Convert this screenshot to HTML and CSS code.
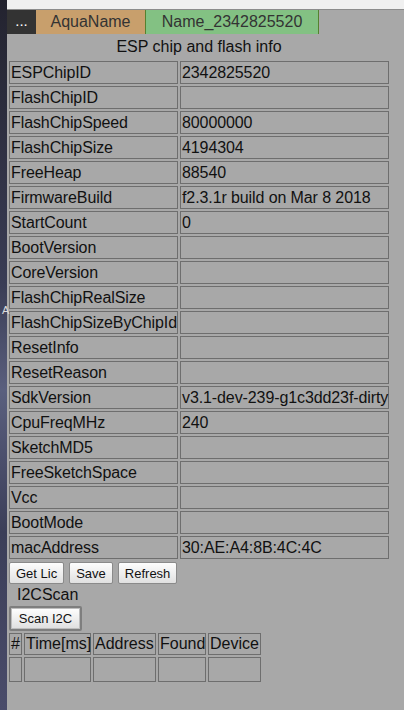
FILE: index.html
```html
<!DOCTYPE html>
<html lang="en">
<head>
    <meta charset="UTF-8">
    <meta name="viewport" content="width=device-width, initial-scale=1.0">
    <title>ESP Info</title>
    <link rel="stylesheet" href="styles.css">
</head>
<body>
    <div class="desk"><span class="desk-a">A</span></div>
    <div class="win">
        <div class="topbar"></div>
        <div class="page">
            <div class="tabs">
                <div class="tab tab-menu">...</div>
                <div class="tab tab-aqua">AquaName</div>
                <div class="tab tab-name">Name_2342825520</div>
            </div>

            <table class="info">
                <caption>ESP chip and flash info</caption>
                <tr><td class="key">ESPChipID</td><td class="val">2342825520</td></tr>
                <tr><td class="key">FlashChipID</td><td class="val"></td></tr>
                <tr><td class="key">FlashChipSpeed</td><td class="val">80000000</td></tr>
                <tr><td class="key">FlashChipSize</td><td class="val">4194304</td></tr>
                <tr><td class="key">FreeHeap</td><td class="val">88540</td></tr>
                <tr><td class="key">FirmwareBuild</td><td class="val">f2.3.1r build on Mar 8 2018</td></tr>
                <tr><td class="key">StartCount</td><td class="val">0</td></tr>
                <tr><td class="key">BootVersion</td><td class="val"></td></tr>
                <tr><td class="key">CoreVersion</td><td class="val"></td></tr>
                <tr><td class="key">FlashChipRealSize</td><td class="val"></td></tr>
                <tr><td class="key">FlashChipSizeByChipId</td><td class="val"></td></tr>
                <tr><td class="key">ResetInfo</td><td class="val"></td></tr>
                <tr><td class="key">ResetReason</td><td class="val"></td></tr>
                <tr><td class="key">SdkVersion</td><td class="val">v3.1-dev-239-g1c3dd23f-dirty</td></tr>
                <tr><td class="key">CpuFreqMHz</td><td class="val">240</td></tr>
                <tr><td class="key">SketchMD5</td><td class="val"></td></tr>
                <tr><td class="key">FreeSketchSpace</td><td class="val"></td></tr>
                <tr><td class="key">Vcc</td><td class="val"></td></tr>
                <tr><td class="key">BootMode</td><td class="val"></td></tr>
                <tr><td class="key">macAddress</td><td class="val">30:AE:A4:8B:4C:4C</td></tr>
            </table>

            <div class="actions">
                <button class="btn">Get Lic</button>
                <button class="btn">Save</button>
                <button class="btn">Refresh</button>
            </div>

            <div class="i2c-title">I2CScan</div>
            <div class="scan-box"><button class="btn btn-scan">Scan I2C</button></div>

            <table class="scan">
                <tr>
                    <td class="c-num">#</td>
                    <td class="c-time">Time[ms]</td>
                    <td class="c-addr">Address</td>
                    <td class="c-found">Found</td>
                    <td class="c-dev">Device</td>
                </tr>
                <tr class="empty"><td></td><td></td><td></td><td></td><td></td></tr>
            </table>
        </div>
    </div>
</body>
</html>
```

FILE: styles.css
```css
body {
    margin: 0;
    height: 710px;
    display: flex;
    font-family: "Liberation Sans", Arial, sans-serif;
    font-size: 16px;
    color: #111;
    overflow: hidden;
}

.desk {
    width: 7px;
    background: linear-gradient(180deg, #23232f 0%, #3a3d55 40%, #5a5f7e 55%, #3b3e58 75%, #4a4c6a 100%);
    position: relative;
}

.desk-a {
    position: absolute;
    top: 304px;
    left: 2px;
    color: #ddd;
    font-size: 11px;
}

.win {
    flex: 1;
    display: flex;
    flex-direction: column;
}

.topbar {
    height: 9px;
    background: #f0f0f0;
    border-bottom: 1px solid #8c8c8c;
}

.page {
    flex: 1;
    background: #a8a8a8;
}

.tabs {
    display: flex;
    height: 24px;
    line-height: 24px;
}

.tab {
    font-size: 16px;
    color: #333;
    text-align: center;
}

.tab-menu {
    width: 29px;
    background: #333333;
    color: #fff;
    font-size: 15px;
    line-height: 22px;
}

.tab-aqua {
    width: 109px;
    background: #c89f6c;
    border-right: 1px solid #56812f;
}

.tab-name {
    width: 172px;
    background: #83c183;
    border-right: 1px solid #56812f;
}

table {
    border-spacing: 2px;
    font-size: 16px;
    table-layout: fixed;
}

td {
    box-sizing: border-box;
    border: 1px solid #6e6e6e;
    padding: 0 0 0 1px;
    line-height: 21px;
    white-space: nowrap;
}

.info {
    width: 384px;
}

.info caption {
    line-height: 24px;
    padding-top: 1px;
}

.info .key {
    width: 169px;
    letter-spacing: -0.1px;
}

.info .val {
    width: 209px;
    letter-spacing: -0.1px;
}

.actions {
    display: flex;
    gap: 5px;
    padding-left: 2px;
    margin-top: 1px;
}

.btn {
    font-family: "Liberation Sans", Arial, sans-serif;
    font-size: 13px;
    color: #111;
    height: 22px;
    padding: 0 6px;
    background: linear-gradient(180deg, #fdfdfd 0%, #ececec 60%, #e0e0e0 100%);
    border: 1px solid #8a8a8a;
    border-radius: 2px;
}

.i2c-title {
    padding-left: 10px;
    line-height: 20px;
    margin-top: 1px;
}

.scan-box {
    display: inline-block;
    margin: 1px 0 0 2px;
    border: 2px solid #7e7e7e;
    border-radius: 2px;
}

.btn-scan {
    display: block;
    height: 21px;
    width: 69px;
    border: 1px solid #bdbdbd;
    border-radius: 0;
}

.scan {
    width: 256px;
}

.scan td {
    padding: 0 1px;
    line-height: 20px;
}

.scan .c-num { width: 13px; }
.scan .c-time { width: 67px; }
.scan .c-addr { width: 63px; }
.scan .c-found { width: 48px; }
.scan .c-dev { width: 53px; }

.scan .empty td {
    height: 25px;
}
```
